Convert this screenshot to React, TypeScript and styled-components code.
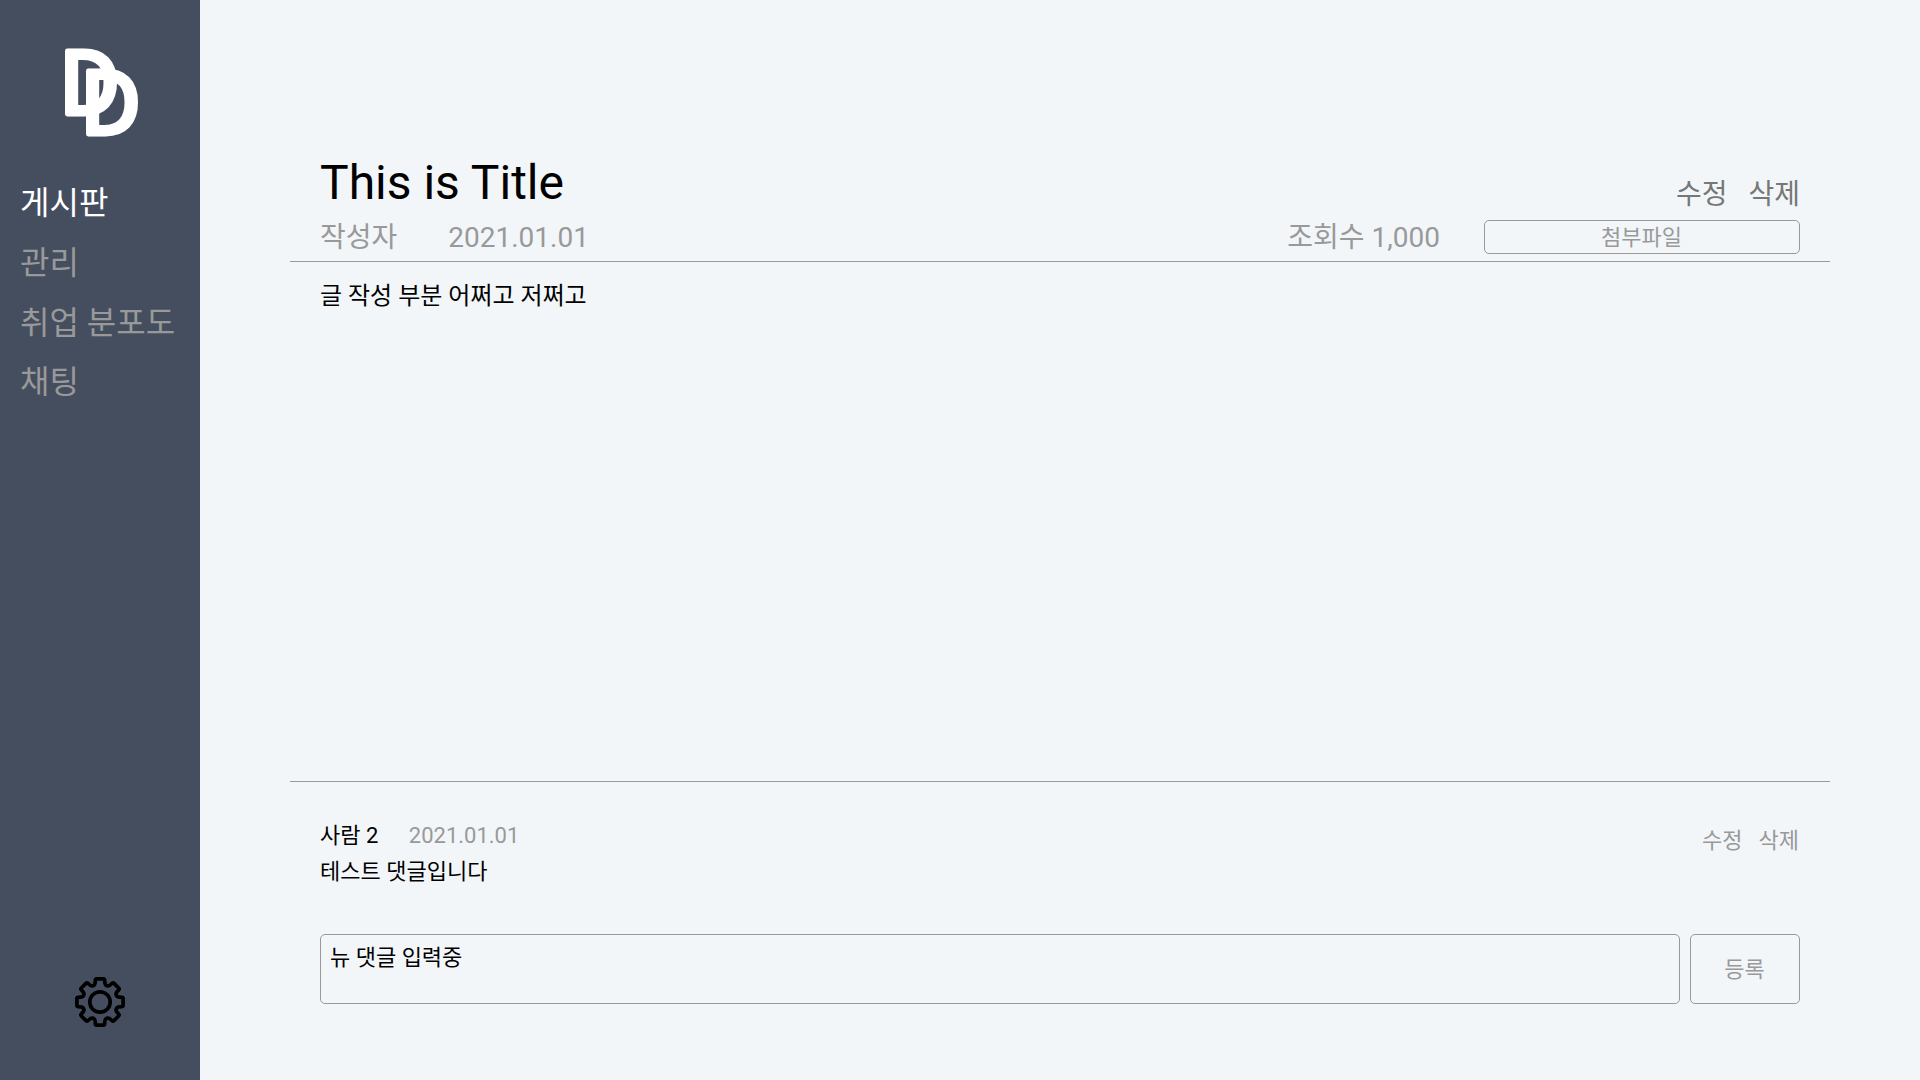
import React from "react";
import styled, { createGlobalStyle } from "styled-components";

const GlobalStyle = createGlobalStyle`
  * { box-sizing: border-box; }
  body { margin: 0; font-family: Roboto, "Noto Sans CJK KR", sans-serif; }
  button, textarea { font: inherit; background: none; }
`;

const Page = styled.div`
  display: flex;
  width: 1920px;
  height: 1080px;
  overflow: hidden;
  background: #f2f6f9;
  color: #000;
`;

const Sidebar = styled.aside`
  display: flex;
  flex-direction: column;
  width: 200px;
  height: 100%;
  padding: 40px 0 53px;
  background: #454e5f;
`;

const Logo = styled.svg`
  display: block;
  align-self: center;
  width: 100px;
  height: 100px;
  flex: none;
  overflow: visible;
`;

const LogoLetter = styled.text`
  font-family: "Noto Sans CJK KR", sans-serif;
  font-size: 86.5px;
  fill: #fff;
  stroke: #fff;
  stroke-width: 4.8px;
  stroke-linejoin: round;
`;

const Nav = styled.nav`
  display: flex;
  flex-direction: column;
  gap: 21.8px;
  margin-top: 44px;
  padding-left: 20px;
`;

const NavItem = styled.a<{ $active?: boolean }>`
  font-size: 32px;
  line-height: 38px;
  white-space: nowrap;
  color: ${(p) => (p.$active ? "#fff" : "#999")};
`;

const Gear = styled.svg`
  display: block;
  width: 50px;
  height: 50px;
  margin: auto auto 0;
`;

const Main = styled.main`
  display: flex;
  flex-direction: column;
  width: 1540px;
  margin-left: 90px;
  padding-top: 155px;
`;

const Header = styled.header`
  display: flex;
  justify-content: space-between;
  height: 107px;
  padding: 0 30px;
  border-bottom: 1px solid #999;
`;

const HeaderSide = styled.div<{ $end?: boolean }>`
  display: flex;
  flex-direction: column;
  align-items: ${(p) => (p.$end ? "flex-end" : "flex-start")};
  padding-top: ${(p) => (p.$end ? 23 : 0)}px;
`;

const Title = styled.h1`
  margin: 0;
  font-size: 48px;
  font-weight: 400;
  line-height: 56px;
`;

const Meta = styled.div<{ $gap: number; $top: number }>`
  display: flex;
  align-items: center;
  gap: ${(p) => p.$gap}px;
  height: 34px;
  margin-top: ${(p) => p.$top}px;
  font-size: 28px;
  line-height: 33px;
  color: #999;
`;

const Actions = styled.div<{ $size: number; $gap: number; $color: string }>`
  display: flex;
  gap: ${(p) => p.$gap}px;
  font-size: ${(p) => p.$size}px;
  line-height: ${(p) => (p.$size === 28 ? 33 : 26)}px;
  color: ${(p) => p.$color};
`;

const Action = styled.span`
  white-space: nowrap;
`;

const OutlineButton = styled.button<{ $w: number; $h: number }>`
  display: flex;
  align-items: center;
  justify-content: center;
  width: ${(p) => p.$w}px;
  height: ${(p) => p.$h}px;
  padding: 1px 1px 0 0;
  border: 1px solid #999;
  border-radius: 5px;
  font-size: 22px;
  line-height: 26px;
  color: #999;
`;

const Article = styled.article`
  height: 520px;
  padding: 20px 30px;
  border-bottom: 1px solid #999;
  font-size: 24px;
  line-height: 28px;
`;

const Comment = styled.section`
  display: flex;
  justify-content: space-between;
  padding: 41px 30px 0;
  font-size: 22px;
  line-height: 26px;
`;

const CommentBody = styled.div`
  display: flex;
  flex-direction: column;
  gap: 10px;
`;

const CommentMeta = styled.div`
  display: flex;
  gap: 30.5px;
`;

const CommentDate = styled.time`
  color: #999;
`;

const CommentActions = styled.div`
  padding: 5px 1px 0 0;
`;

const CommentForm = styled.form`
  display: flex;
  gap: 10px;
  margin-top: 49px;
  padding: 0 30px;
`;

const CommentInput = styled.textarea`
  display: block;
  flex: 1;
  height: 70px;
  padding: 10px 9px 0;
  border: 1px solid #999;
  border-radius: 5px;
  outline: none;
  resize: none;
  overflow: hidden;
  font-size: 22px;
  line-height: 26px;
  color: #000;
`;

// One tooth with half a valley on either side, repeated every 45 degrees.
const tooth: [string, number, number][] = [
  ["L", -6.75, -16.3],
  ["Q", -5.1, -16.9],
  ["", -4.9, -19],
  ["L", -4.6, -22.0],
  ["Q", -4.5, -23.1],
  ["", -3.3, -23.1],
  ["L", 3.3, -23.1],
  ["Q", 4.5, -23.1],
  ["", 4.6, -22.0],
  ["L", 4.9, -19],
  ["Q", 5.1, -16.9],
  ["", 6.75, -16.3],
];

const gearPath = Array.from({ length: 8 }, (_, i) => {
  const a = (i * Math.PI) / 4;
  return tooth
    .map(([cmd, x, y], k) => {
      const px = (x * Math.cos(a) - y * Math.sin(a)).toFixed(2);
      const py = (x * Math.sin(a) + y * Math.cos(a)).toFixed(2);
      return `${i === 0 && k === 0 ? "M" : cmd}${px} ${py}`;
    })
    .join(" ");
}).join(" ") + "Z";

const menu = ["게시판", "관리", "취업 분포도", "채팅"];

export default function App() {
  return (
    <>
      <GlobalStyle />
      <Page>
        <Sidebar>
          <Logo viewBox="50 40 100 100">
            <LogoLetter transform="translate(58.5 114.4) scale(1.03 1)">D</LogoLetter>
            <LogoLetter transform="translate(79.5 133.5) scale(1.03 1)">D</LogoLetter>
          </Logo>
          <Nav>
            {menu.map((name, i) => (
              <NavItem key={name} $active={i === 0}>{name}</NavItem>
            ))}
          </Nav>
          <Gear viewBox="-25 -25 50 50" fill="none" stroke="#000" strokeWidth="3.7" strokeLinejoin="round">
            <path d={gearPath} />
            <circle r="10.2" />
          </Gear>
        </Sidebar>
        <Main>
          <Header>
            <HeaderSide>
              <Title>This is Title</Title>
              <Meta $gap={51} $top={9}>
                <span>작성자</span>
                <span>2021.01.01</span>
              </Meta>
            </HeaderSide>
            <HeaderSide $end>
              <Actions $size={28} $gap={21} $color="#777">
                <Action>수정</Action>
                <Action>삭제</Action>
              </Actions>
              <Meta $gap={44} $top={9}>
                <span>조회수 1,000</span>
                <OutlineButton $w={316} $h={34}>첨부파일</OutlineButton>
              </Meta>
            </HeaderSide>
          </Header>
          <Article>글 작성 부분 어쩌고 저쩌고</Article>
          <Comment>
            <CommentBody>
              <CommentMeta>
                <span>사람 2</span>
                <CommentDate>2021.01.01</CommentDate>
              </CommentMeta>
              <span>테스트 댓글입니다</span>
            </CommentBody>
            <CommentActions>
              <Actions $size={22} $gap={16} $color="#999">
                <Action>수정</Action>
                <Action>삭제</Action>
              </Actions>
            </CommentActions>
          </Comment>
          <CommentForm>
            <CommentInput defaultValue="뉴 댓글 입력중" />
            <OutlineButton type="button" $w={110} $h={70}>등록</OutlineButton>
          </CommentForm>
        </Main>
      </Page>
    </>
  );
}
